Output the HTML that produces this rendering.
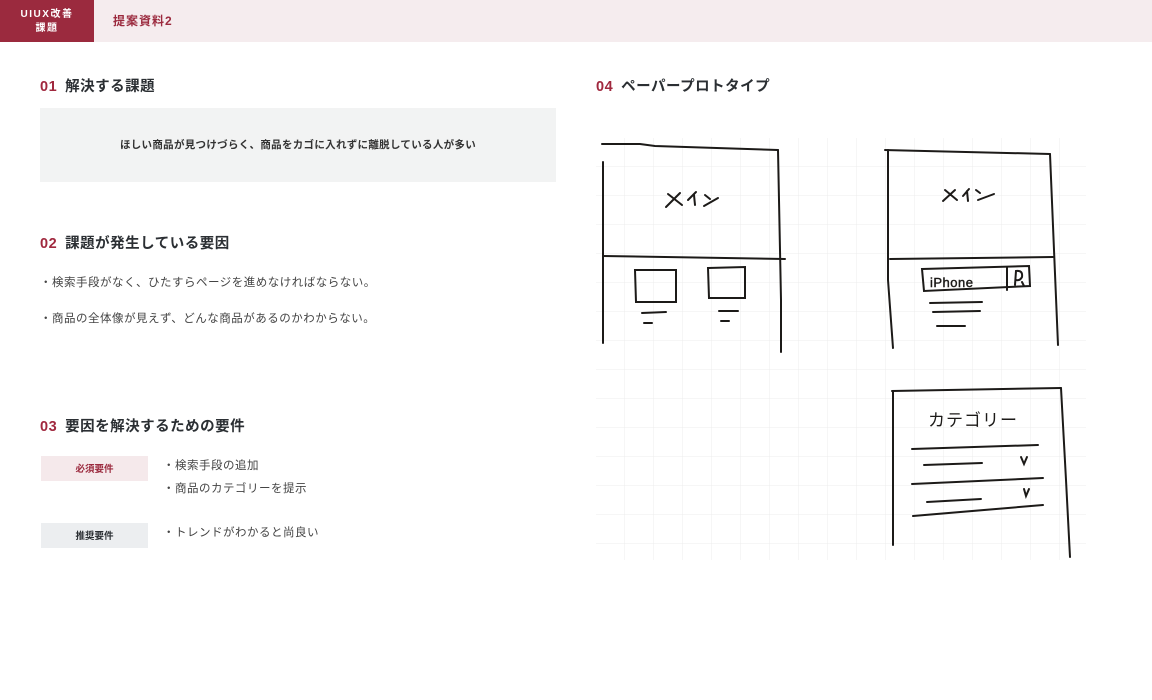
<!DOCTYPE html>
<html><head><meta charset="utf-8"><style>
*{margin:0;padding:0;box-sizing:border-box}
body{width:1152px;height:700px;background:#fff;font-family:"Liberation Sans","Noto Sans CJK JP",sans-serif;color:#333;position:relative;overflow:hidden}
.hdr{position:absolute;left:0;top:0;width:1152px;height:42px;background:#f5ecee}
.logo{position:absolute;left:0;top:0;width:94px;height:42px;background:#9b2a3e;color:#fff;font-size:10px;font-weight:bold;text-align:center;line-height:14px;padding-top:8px;letter-spacing:1.5px}
.ttl{position:absolute;left:113px;top:12px;font-size:12px;color:#9b2a3e;font-weight:bold;letter-spacing:1px}
.h{position:absolute;font-size:14.5px;font-weight:bold;color:#2b2f33;letter-spacing:.5px}
.h b{color:#a0283e;margin-right:8px}
.box{position:absolute;left:40px;top:108px;width:516px;height:74px;background:#f2f3f3;font-size:10.5px;font-weight:bold;text-align:center;line-height:74px;letter-spacing:.3px;color:#333}
.t{position:absolute;font-size:11.5px;color:#444;letter-spacing:.5px}
.tag{position:absolute;left:41px;width:107px;height:25px;font-size:9.5px;font-weight:bold;text-align:center;line-height:27px}
</style></head><body>
<div class="hdr"></div>
<div class="logo">UIUX改善<br>課題</div>
<div class="ttl">提案資料2</div>

<div class="h" style="left:40px;top:75px"><b>01</b>解決する課題</div>
<div class="box">ほしい商品が見つけづらく、商品をカゴに入れずに離脱している人が多い</div>

<div class="h" style="left:40px;top:232px"><b>02</b>課題が発生している要因</div>
<div class="t" style="left:40px;top:274px">・検索手段がなく、ひたすらページを進めなければならない。</div>
<div class="t" style="left:40px;top:310px">・商品の全体像が見えず、どんな商品があるのかわからない。</div>

<div class="h" style="left:40px;top:415px"><b>03</b>要因を解決するための要件</div>
<div class="tag" style="top:456px;background:#f5e9eb;color:#9b2a3e">必須要件</div>
<div class="t" style="left:163px;top:457px">・検索手段の追加</div>
<div class="t" style="left:163px;top:480px">・商品のカテゴリーを提示</div>
<div class="tag" style="top:523px;background:#eceef0;color:#2b2f33">推奨要件</div>
<div class="t" style="left:163px;top:524px">・トレンドがわかると尚良い</div>

<div class="h" style="left:596px;top:75px"><b>04</b>ペーパープロトタイプ</div>

<svg style="position:absolute;left:0;top:0" width="1152" height="700">
<defs><pattern id="g" x="596" y="138" width="29" height="29" patternUnits="userSpaceOnUse"><path d="M29 0V29M0 29H29" stroke="#ececec" stroke-width="1" fill="none"/></pattern></defs>
<rect x="596" y="138" width="490" height="422" fill="url(#g)"/>
<g stroke="#1c1a18" stroke-width="2" fill="none" stroke-linecap="round">
<path d="M602 144L640 144 655 146 778 150"/><path d="M603 162L603 343"/><path d="M778 150L781 300 781 352"/><path d="M603 256L785 259"/>
<path d="M635 270L676 270 676 302 636 302Z"/><path d="M708 268L745 267 745 298 709 298Z"/>
<path d="M642 313L666 312M644 323L652 323M719 311L738 311M721 321L729 321"/>
<path d="M885 150L1050 154"/><path d="M888 150L888 280 893 348"/><path d="M1050 154L1054 250 1058 345"/><path d="M890 259L1053 257"/>
<path d="M922 269L1029 266 1030 286 924 291Z"/><path d="M1007 267L1007 290"/>
<path d="M930 303L982 302M933 312L980 311M937 326L965 326"/>
<path d="M892 391L1061 388"/><path d="M893 391L893 545"/><path d="M1061 388L1066 480 1070 557"/>
<path d="M912 449L1038 445M924 465L982 463M912 484L1043 478M927 502L981 499M913 516L1043 505"/>
<path d="M1021 457L1024 464 1027 457M1024 489L1026 496 1029 489"/>
<path d="M666 207L680 193M668 194L682 205M688 200L696 192M694 195L695 205M705 195L710 199M704 206L718 198"/>
<path d="M943 201L955 190M945 190L957 200M963 196L969 189M967 191L968 201M976 190L980 193M978 200L994 194"/>
<path d="M1015 285L1016 271Q1023 270 1022 277Q1020 281 1016 280M1022 282L1024 286"/>
</g>
<text x="930" y="287" font-family="Liberation Sans" font-size="13" fill="#1c1a18" stroke="#1c1a18" stroke-width=".4" letter-spacing=".5">iPhone</text>
<text x="928" y="426" font-family="Liberation Sans,Noto Sans CJK JP,sans-serif" font-size="17" fill="#1c1a18" letter-spacing="1">カテゴリー</text>
</svg>
</body></html>
